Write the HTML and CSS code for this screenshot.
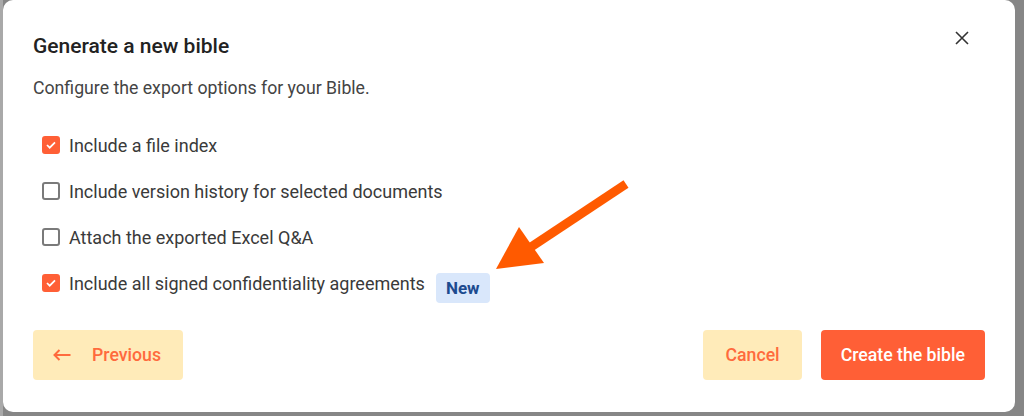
FILE: index.html
```html
<!DOCTYPE html>
<html lang="en">
<head>
<meta charset="utf-8">
<title>Generate a new bible</title>
<link rel="stylesheet" href="styles.css">
</head>
<body>
<div class="dialog">
  <div class="header">
    <h2 class="title">Generate a new bible</h2>
    <button class="close" aria-label="Close">
      <svg width="14" height="14" viewBox="0 0 14 14"><path d="M1 1L13 13M13 1L1 13" stroke="#333" stroke-width="1.6" fill="none"/></svg>
    </button>
  </div>
  <p class="subtitle">Configure the export options for your Bible.</p>
  <div class="options">
    <label class="option"><span class="box checked"><svg width="10" height="8" viewBox="0 0 10 8"><path d="M1 4l2.7 2.7L9 1.3" stroke="#fff" stroke-width="1.7" fill="none"/></svg></span><span class="label">Include a file index</span></label>
    <label class="option"><span class="box"></span><span class="label">Include version history for selected documents</span></label>
    <label class="option"><span class="box"></span><span class="label">Attach the exported Excel Q&amp;A</span></label>
    <label class="option"><span class="box checked"><svg width="10" height="8" viewBox="0 0 10 8"><path d="M1 4l2.7 2.7L9 1.3" stroke="#fff" stroke-width="1.7" fill="none"/></svg></span><span class="label">Include all signed confidentiality agreements</span><span class="badge">New</span></label>
  </div>
  <div class="footer">
    <button class="btn btn-soft btn-prev">
      <svg width="18" height="12" viewBox="0 0 18 12"><path d="M17.5 6H1.5M6.5 1L1.5 6l5 5" stroke="currentColor" stroke-width="2" fill="none"/></svg>
      <span>Previous</span>
    </button>
    <div class="actions">
      <button class="btn btn-soft btn-cancel">Cancel</button>
      <button class="btn btn-primary">Create the bible</button>
    </div>
  </div>
  <svg class="pointer" width="1024" height="416" viewBox="0 0 1024 416">
    <line x1="626" y1="184" x2="528" y2="249" stroke="#ff5a00" stroke-width="9"/>
    <polygon points="496,269 519,227 544,263" fill="#ff5a00"/>
  </svg>
</div>
</body>
</html>
```

FILE: styles.css
```css
* { box-sizing: border-box; }
html, body { margin: 0; padding: 0; }
body {
  width: 1024px;
  height: 416px;
  overflow: hidden;
  background: linear-gradient(to right, #a9a9a9 3px, #868686 3px);
  font-family: Roboto, "Liberation Sans", sans-serif;
}
.dialog {
  position: relative;
  margin-left: 3px;
  width: 1012px;
  height: 412px;
  background: #fff;
  border-radius: 10px;
  padding: 32px 30px;
}
.header {
  display: flex;
  justify-content: space-between;
  align-items: flex-start;
}
.title {
  margin: 0;
  font-size: 21px;
  line-height: 28px;
  font-weight: 500;
  color: #222;
}
.close {
  margin: -1px 16px 0 0;
  padding: 0;
  border: 0;
  background: none;
  width: 14px;
  height: 14px;
  display: block;
}
.close svg { display: block; }
.subtitle {
  margin: 16px 0 0;
  font-size: 17.7px;
  line-height: 24px;
  color: #444;
}
.options {
  margin-top: 22px;
  padding-left: 9px;
  display: flex;
  flex-direction: column;
}
.option {
  height: 46px;
  display: flex;
  align-items: center;
  font-size: 18px;
  color: #3a3a3a;
}
.box {
  width: 18px;
  height: 18px;
  border: 2px solid #7a7a7a;
  border-radius: 3px;
  margin-right: 9px;
  display: flex;
  align-items: center;
  justify-content: center;
  flex: none;
}
.box.checked {
  background: #ff5f36;
  border-color: #ff5f36;
}
.badge {
  margin: 10px 0 0 11px;
  height: 30px;
  padding: 0 10px;
  display: inline-flex;
  align-items: center;
  background: #d9e7fb;
  color: #1d4b8f;
  font-size: 17px;
  font-weight: 700;
  border-radius: 4px;
}
.footer {
  margin-top: 24px;
  display: flex;
  justify-content: space-between;
}
.actions {
  display: flex;
  gap: 19px;
}
.btn {
  height: 50px;
  border: 0;
  border-radius: 4px;
  font-family: inherit;
  font-size: 17.7px;
  font-weight: 500;
  padding: 0 20px;
  display: flex;
  align-items: center;
}
.btn-soft {
  background: #ffebb9;
  color: #ff6a3d;
}
.btn-cancel {
  padding: 0 22px;
}
.btn-primary {
  background: #ff5f36;
  color: #fff;
  padding: 0 20px;
}
.btn-prev {
  padding: 0 22px 0 20px;
  gap: 21px;
}
.btn-prev svg { display: block; }
.pointer {
  position: absolute;
  left: -3px;
  top: 0;
  pointer-events: none;
}
```
